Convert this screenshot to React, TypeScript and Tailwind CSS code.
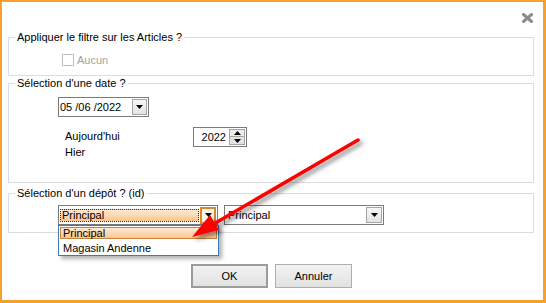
import React from "react";

const Tri = ({ up = false }: { up?: boolean }) => (
  <svg width="7" height="4" viewBox="0 0 7 4">
    <polygon points={up ? "3.5,0 7,4 0,4" : "0,0 7,0 3.5,4"} fill="#000" />
  </svg>
);

const Legend = ({ children }: { children: React.ReactNode }) => (
  <legend className="ml-[6px] px-[2px] leading-[14px]">{children}</legend>
);

export default function App() {
  return (
    <div className="relative w-[546px] h-[303px] overflow-hidden bg-white border-l-2 border-t-2 border-r-[3px] border-b-[3px] border-[#f6a02e] font-['Liberation_Sans',Arial,sans-serif] text-[11px] text-black">
      <div className="flex flex-col pl-[6px] pr-[9px]">
        {/* header */}
        <div className="flex h-[28px] justify-end">
          <svg className="mt-[11px] mr-[1px]" width="11" height="10" viewBox="0 0 11 10">
            <path d="M1.5 1.5 L9.5 8.5 M9.5 1.5 L1.5 8.5" stroke="#8c8c8c" strokeWidth="3" strokeLinecap="square" />
          </svg>
        </div>

        {/* articles */}
        <fieldset className="border border-[#dcdcdc] pb-[9px]">
          <Legend>Appliquer le filtre sur les Articles ?</Legend>
          <div className="mt-[10px] ml-[53px] flex h-[12px] items-center gap-[3px]">
            <span className="h-[12px] w-[12px] border border-[#bcbcbc] bg-white" />
            <span className="text-[#a3a3a3] leading-[14px]">Aucun</span>
          </div>
        </fieldset>

        {/* date */}
        <fieldset className="border border-[#dcdcdc] pb-[22px]">
          <Legend>Sélection d'une date ?</Legend>
          <div className="mt-[7px] ml-[49px] flex h-[20px] w-[91px] items-center justify-between border border-[#7a7a7a] pl-[1px] pr-[1px]">
            <span className="leading-[14px]">05 /06 /2022</span>
            <span className="flex h-[16px] w-[15px] items-center justify-center border border-[#a5a5a5] bg-linear-to-b from-[#f6f6f6] to-[#e3e3e3]">
              <Tri />
            </span>
          </div>
          <div className="mt-[10px] flex">
            <div className="ml-[56px] w-[128px] pt-[1px] leading-[16px]">
              <div>Aujourd'hui</div>
              <div>Hier</div>
            </div>
            <div className="flex h-[20px] w-[54px] items-center justify-end border border-[#7a7a7a] pr-[1px]">
              <span className="mr-[3px] leading-[14px]">2022</span>
              <div className="flex h-[16px] w-[16px] flex-col">
                <span className="flex h-[8px] items-center justify-center border border-[#a5a5a5] bg-[#ececec]">
                  <Tri up />
                </span>
                <span className="flex h-[8px] items-center justify-center border border-t-0 border-[#a5a5a5] bg-[#e4e4e4]">
                  <Tri />
                </span>
              </div>
            </div>
          </div>
        </fieldset>

        {/* depot */}
        <fieldset className="mt-[3px] border border-[#dcdcdc] pb-[7px]">
          <Legend>Sélection d'un dépôt ? (id)</Legend>
          <div className="mt-[5px] ml-[49px] flex gap-[6px]">
            <div className="flex h-[20px] w-[160px] items-center justify-between border border-[#7a7a7a] pl-[1px] pr-[1px]">
              <span className="flex h-[13px] w-[139px] items-center border border-dotted border-[#333] bg-linear-to-b from-[#ffe9d2] to-[#fcc58d] pl-[1px] leading-[12px]">
                Principal
              </span>
              <span className="flex h-[17px] w-[16px] items-center justify-center border-2 border-[#d48a34] bg-[#fff3e3]">
                <Tri />
              </span>
            </div>
            <div className="flex h-[20px] w-[160px] items-center justify-between border border-[#7a7a7a] pl-[3px] pr-[1px]">
              <span className="leading-[14px]">Principal</span>
              <span className="flex h-[16px] w-[16px] items-center justify-center border border-[#a5a5a5] bg-linear-to-b from-[#f6f6f6] to-[#e3e3e3]">
                <Tri />
              </span>
            </div>
          </div>
        </fieldset>

        {/* buttons */}
        <div className="mt-[31px] flex justify-center gap-[7px] pl-[1px]">
          <button className="h-[24px] w-[77px] border-2 border-[#9c9c9c] bg-linear-to-b from-[#f2f2f2] to-[#e2e2e2] leading-[14px]">
            OK
          </button>
          <button className="h-[24px] w-[77px] border border-[#adadad] bg-linear-to-b from-[#f2f2f2] to-[#e2e2e2] leading-[14px]">
            Annuler
          </button>
        </div>
      </div>

      {/* open list */}
      <div className="absolute left-[56px] top-[223px] flex h-[31px] w-[161px] flex-col border border-[#3d7ab8] bg-white px-[1px] pt-[1px] shadow-[3px_3px_4px_rgba(0,0,0,0.3)]">
        <span className="flex h-[12px] items-center border border-[#c5843a] bg-linear-to-b from-[#ffe9d2] to-[#fcc58d] pl-[2px] leading-[12px]">
          Principal
        </span>
        <span className="mt-[2px] pl-[3px] leading-[14px]">Magasin Andenne</span>
      </div>

      {/* annotation arrow */}
      <svg className="pointer-events-none absolute -left-[2px] -top-[2px]" width="546" height="303">
        <defs>
          <filter id="sh" x="-20%" y="-20%" width="140%" height="140%">
            <feDropShadow dx="3" dy="3" stdDeviation="2" floodColor="#000" floodOpacity="0.45" />
          </filter>
        </defs>
        <g filter="url(#sh)">
          <line x1="358" y1="140" x2="212" y2="225" stroke="#ff0000" strokeWidth="3.5" strokeLinecap="round" />
          <polygon points="192,237 210,215 219,230" fill="#ff0000" />
        </g>
      </svg>
    </div>
  );
}
